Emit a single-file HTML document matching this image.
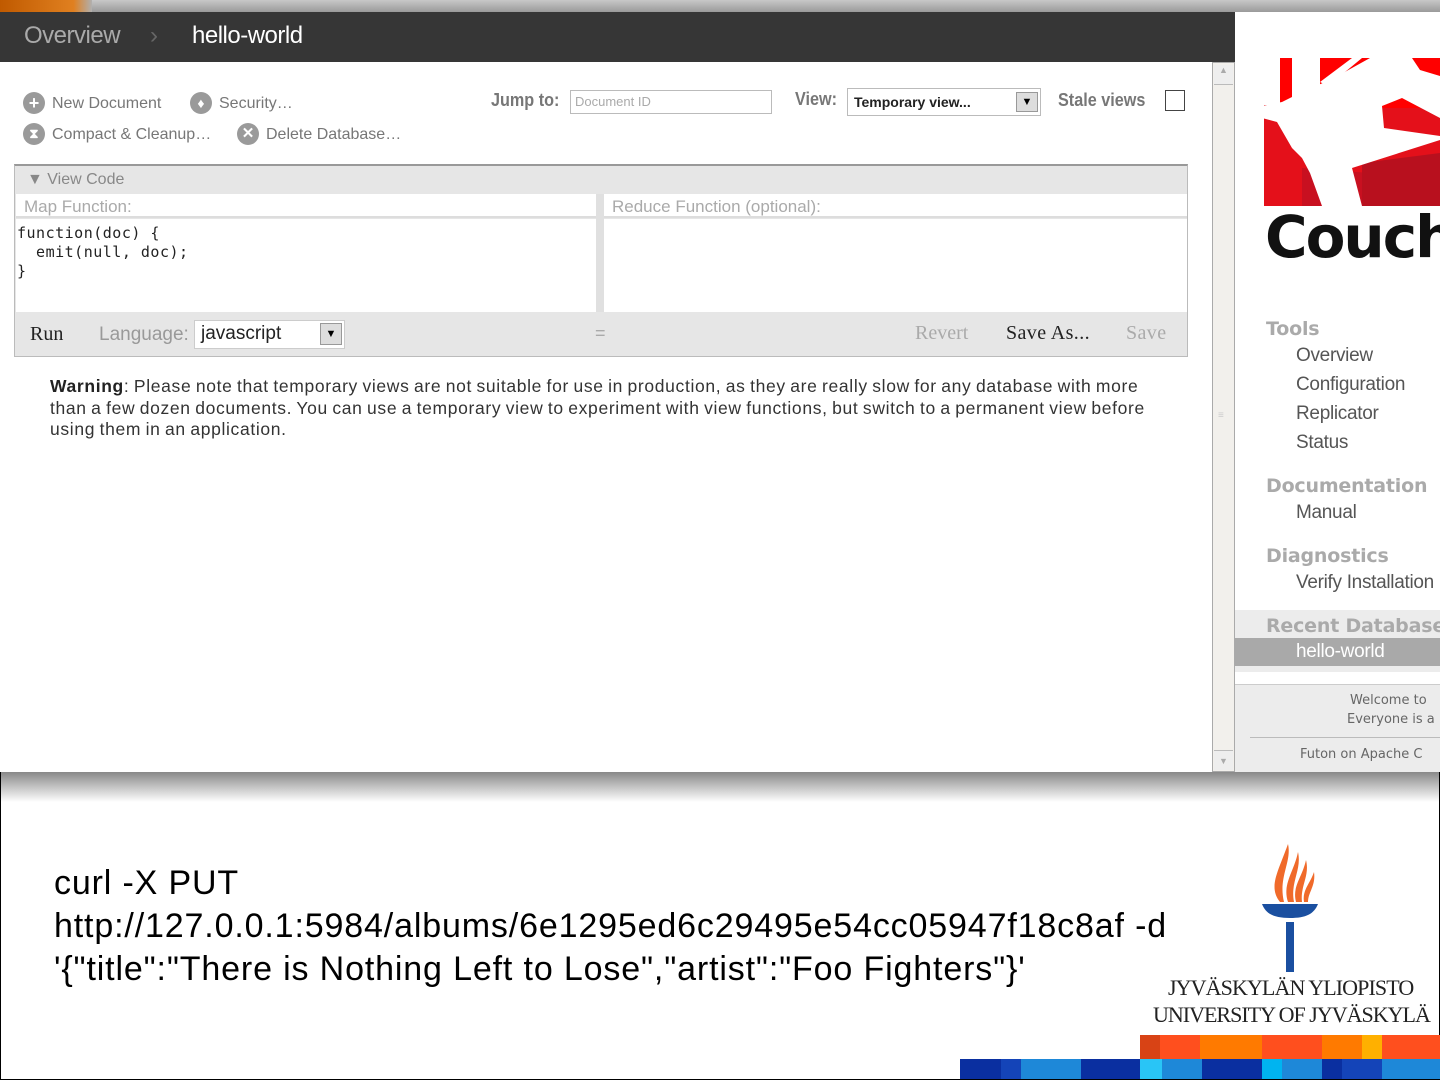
<!DOCTYPE html>
<html><head><meta charset="utf-8"><style>
*{margin:0;padding:0;box-sizing:border-box}
body{width:1440px;height:1080px;position:relative;overflow:hidden;background:#fff;font-family:"Liberation Sans",sans-serif}
.a{position:absolute;white-space:nowrap}
.g{color:#777}
.ic{position:absolute;width:22px;height:22px;border-radius:50%;background:#9a9a9a;color:#fff;font-weight:bold;text-align:center;line-height:22px;font-size:18px}
.sb{color:#555;font-size:19px;position:absolute;left:1296px;white-space:nowrap;letter-spacing:-.3px}
.sh{color:#aaa;font-size:19px;font-weight:bold;position:absolute;left:1266px;font-family:"DejaVu Sans",sans-serif;white-space:nowrap;letter-spacing:-.2px}
</style></head><body>
<div class="a" style="left:0;top:772px;width:1440px;height:308px;border:1px solid #000;border-top:none"></div>
<div class="a" style="left:0;top:0;width:1440px;height:12px;background:linear-gradient(#c8c8c8,#9a9a9a)"></div>
<div class="a" style="left:0;top:0;width:92px;height:12px;background:linear-gradient(90deg,#c05a00,#e08020 80%,#b0b0b0)"></div>
<div class="a" style="left:0;top:12px;width:1235px;height:50px;background:#363636"></div>
<div class="a" style="left:24px;top:22px;font-size:24px;color:#aaa;letter-spacing:-.5px">Overview</div>
<div class="a" style="left:150px;top:22px;font-size:24px;color:#666">›</div>
<div class="a" style="left:192px;top:22px;font-size:24px;color:#fff;letter-spacing:-.5px">hello-world</div>
<div class="a" style="left:0;top:62px;width:1212px;height:710px;background:#fff"></div>
<div class="ic" style="left:23px;top:92px">+</div><div class="a g" style="left:52px;top:95px;font-size:16px">New Document</div>
<div class="ic" style="left:190px;top:92px;font-size:14px">♦</div><div class="a g" style="left:219px;top:95px;font-size:16px">Security…</div>
<div class="ic" style="left:23px;top:123px;font-size:13px">⧗</div><div class="a g" style="left:52px;top:126px;font-size:16px">Compact &amp; Cleanup…</div>
<div class="ic" style="left:237px;top:123px;font-size:15px">✕</div><div class="a g" style="left:266px;top:126px;font-size:16px">Delete Database…</div>
<div class="a" style="left:491px;top:90px;font-size:18px;color:#777;font-weight:bold;transform:scaleX(.9);transform-origin:left">Jump to:</div>
<div class="a" style="left:570px;top:90px;width:202px;height:24px;border:1px solid #bbb;font-size:13px;color:#aaa;padding:3px 4px">Document ID</div>
<div class="a" style="left:795px;top:89px;font-size:18px;color:#777;font-weight:bold;transform:scaleX(.9);transform-origin:left">View:</div>
<div class="a" style="left:847px;top:88px;width:194px;height:28px;border:1px solid #bbb;font-size:14px;font-weight:bold;color:#222;padding:5px 6px">Temporary view...</div>
<div class="a" style="left:1016px;top:92px;width:22px;height:20px;background:#ddd;border:1px solid #999;font-size:11px;text-align:center;line-height:18px">▼</div>
<div class="a" style="left:1058px;top:90px;font-size:18px;color:#777;font-weight:bold;transform:scaleX(.9);transform-origin:left">Stale views</div>
<div class="a" style="left:1165px;top:90px;width:20px;height:21px;border:1.5px solid #444;background:#fff"></div>
<div class="a" style="left:14px;top:164px;width:1174px;height:193px;background:#e6e6e6;border:1px solid #bbb;border-top:2px solid #999"></div>
<div class="a" style="left:27px;top:171px;font-size:16px;color:#888">▼ View Code</div>
<div class="a" style="left:16px;top:194px;width:580px;height:24px;background:#fff;border-bottom:2px solid #ddd"></div>
<div class="a" style="left:24px;top:197px;font-size:17px;color:#aaa">Map Function:</div>
<div class="a" style="left:16px;top:219px;width:580px;height:93px;background:#fff"></div>
<div class="a" style="left:17px;top:224px;font-family:'DejaVu Sans Mono',monospace;font-size:15px;line-height:19px;color:#222;white-space:pre;letter-spacing:.5px">function(doc) {
  emit(null, doc);
}</div>
<div class="a" style="left:596px;top:194px;width:8px;height:118px;background:#e0e0e0"></div>
<div class="a" style="left:604px;top:194px;width:583px;height:24px;background:#fff;border-bottom:2px solid #ddd"></div>
<div class="a" style="left:612px;top:197px;font-size:17px;color:#aaa">Reduce Function (optional):</div>
<div class="a" style="left:604px;top:219px;width:583px;height:93px;background:#fff"></div>
<div class="a" style="left:30px;top:323px;font-family:'Liberation Serif',serif;font-size:20px;color:#222">Run</div>
<div class="a" style="left:99px;top:324px;font-size:19px;color:#999">Language:</div>
<div class="a" style="left:194px;top:320px;width:151px;height:29px;background:#fff;border:1px solid #ccc;font-size:19px;color:#222;padding:2px 6px">javascript</div>
<div class="a" style="left:320px;top:323px;width:22px;height:22px;background:#ddd;border:1px solid #999;font-size:11px;text-align:center;line-height:20px">▼</div>
<div class="a" style="left:595px;top:323px;font-size:18px;color:#aaa">=</div>
<div class="a" style="left:915px;top:322px;font-family:'Liberation Serif',serif;font-size:20px;color:#aaa">Revert</div>
<div class="a" style="left:1006px;top:322px;font-family:'Liberation Serif',serif;font-size:20px;color:#222;letter-spacing:.4px">Save As...</div>
<div class="a" style="left:1126px;top:322px;font-family:'Liberation Serif',serif;font-size:20px;color:#aaa;letter-spacing:.4px">Save</div>
<div class="a" style="left:50px;top:376px;width:1160px;white-space:nowrap;font-size:17.5px;line-height:21.5px;color:#333;letter-spacing:.65px;word-spacing:-1px"><b style="color:#222">Warning</b>: Please note that temporary views are not suitable for use in production, as they are really slow for any database with more<br>than a few dozen documents. You can use a temporary view to experiment with view functions, but switch to a permanent view before<br>using them in an application.</div>
<div class="a" style="left:1212px;top:62px;width:23px;height:710px;background:#f2f0ec;border:1px solid #aaa"></div>
<div class="a" style="left:1214px;top:65px;width:19px;height:20px;background:#eee;border-bottom:1px solid #bbb;font-size:9px;color:#aaa;text-align:center">▲</div>
<div class="a" style="left:1214px;top:750px;width:19px;height:20px;background:#eee;border-top:1px solid #bbb;font-size:9px;color:#aaa;text-align:center;line-height:20px">▼</div>
<div class="a" style="left:1218px;top:410px;font-size:10px;color:#ccc">≡</div>
<div class="a" style="left:1235px;top:12px;width:205px;height:760px;background:#fff"></div>
<svg class="a" style="left:1262px;top:58px" width="178" height="148" viewBox="0 0 178 148">
<rect x="2" y="47" width="176" height="101" fill="#e4101a"/>
<rect x="18" y="0" width="160" height="50" fill="#ff0000"/>
<polygon points="40,110 178,120 178,148 40,148" fill="#c81020"/>
<polygon points="100,105 178,95 178,148 100,148" fill="#b8101e"/>
<polygon points="30,0 58,0 58,40 38,55 30,48" fill="#fff"/>
<polygon points="0,48 20,44 36,36 72,20 108,0 150,0 158,12 178,18 178,60 140,40 120,48 122,70 178,78 178,82 90,110 100,148 60,148 48,115 40,100 30,90 15,64 0,60" fill="#fff"/>
<polygon points="90,0 100,0 66,28 58,24" fill="#fff"/>
</svg>
<div class="a" style="left:1265px;top:203px;font-family:'DejaVu Sans',sans-serif;font-weight:bold;font-size:58px;color:#111;letter-spacing:-2px">Couch</div>
<div class="sh" style="top:318px">Tools</div>
<div class="sb" style="top:345px">Overview</div>
<div class="sb" style="top:374px">Configuration</div>
<div class="sb" style="top:403px">Replicator</div>
<div class="sb" style="top:432px">Status</div>
<div class="sh" style="top:475px">Documentation</div>
<div class="sb" style="top:502px">Manual</div>
<div class="sh" style="top:545px">Diagnostics</div>
<div class="sb" style="top:572px">Verify Installation</div>
<div class="a" style="left:1235px;top:610px;width:205px;height:28px;background:#ececec"></div>
<div class="sh" style="top:615px">Recent Databases</div>
<div class="a" style="left:1235px;top:638px;width:205px;height:28px;background:#a9a9a9"></div>
<div class="a" style="left:1296px;top:641px;font-size:19px;color:#fff;letter-spacing:-.3px">hello-world</div>
<div class="a" style="left:1235px;top:666px;width:205px;height:6px;background:#ececec"></div>
<div class="a" style="left:1235px;top:684px;width:205px;height:88px;background:#ececec;border-top:1px solid #ccc"></div>
<div class="a" style="left:1350px;top:693px;font-family:'DejaVu Sans',sans-serif;font-size:13px;color:#666">Welcome to</div>
<div class="a" style="left:1347px;top:712px;font-family:'DejaVu Sans',sans-serif;font-size:13px;color:#666">Everyone is a</div>
<div class="a" style="left:1250px;top:737px;width:190px;height:1px;background:#bbb"></div>
<div class="a" style="left:1300px;top:747px;font-family:'DejaVu Sans',sans-serif;font-size:13px;color:#666">Futon on Apache C</div>
<div class="a" style="left:1px;top:772px;width:1438px;height:30px;background:linear-gradient(#888,rgba(255,255,255,0))"></div>
<div class="a" style="left:54px;top:862px;font-size:34px;line-height:43px;color:#000;letter-spacing:.85px">curl -X PUT<br>http://127.0.0.1:5984/albums/6e1295ed6c29495e54cc05947f18c8af -d<br>'{"title":"There is Nothing Left to Lose","artist":"Foo Fighters"}'</div>
<svg class="a" style="left:1258px;top:842px" width="64" height="132" viewBox="0 0 64 132">
<path d="M22 60 C10 45 20 30 30 2 C34 20 20 35 26 60Z M30 60 C24 42 36 30 40 10 C44 28 32 40 36 60Z M38 60 C34 44 44 36 48 18 C52 34 42 44 44 60Z M46 60 C44 48 52 42 56 30 C58 44 50 50 50 60Z" fill="#f06a2a"/>
<path d="M4 62 H60 C56 72 48 76 32 76 C16 76 8 72 4 62Z" fill="#1a4fa0"/>
<rect x="28" y="80" width="8" height="50" fill="#1a4fa0"/>
</svg>
<div class="a" style="left:1168px;top:975px;font-family:'Liberation Serif',serif;font-size:22px;color:#222;letter-spacing:-.9px">JYVÄSKYLÄN YLIOPISTO</div>
<div class="a" style="left:1153px;top:1002px;font-family:'Liberation Serif',serif;font-size:22px;color:#222;letter-spacing:-1px">UNIVERSITY OF JYVÄSKYLÄ</div>
<div class="a" style="left:1140px;top:1035px;height:24px;width:300px;display:flex">
<div style="width:20px;background:#d84315"></div><div style="width:40px;background:#ff4f1e"></div><div style="width:62px;background:#ff7a00"></div><div style="width:60px;background:#ff4f1e"></div><div style="width:40px;background:#ff7a00"></div><div style="width:20px;background:#ffb000"></div><div style="width:58px;background:#ff4f1e"></div></div>
<div class="a" style="left:960px;top:1059px;height:20px;width:480px;display:flex">
<div style="width:41px;background:#0a2fa0"></div><div style="width:20px;background:#1444b8"></div><div style="width:60px;background:#1e88d8"></div><div style="width:59px;background:#0a2fa0"></div><div style="width:22px;background:#29c5f6"></div><div style="width:40px;background:#1e88d8"></div><div style="width:60px;background:#0a2fa0"></div><div style="width:20px;background:#00b4f0"></div><div style="width:40px;background:#1e88d8"></div><div style="width:20px;background:#0a2fa0"></div><div style="width:40px;background:#1444b8"></div><div style="width:58px;background:#1e88d8"></div></div>
<div class="a" style="left:0;top:1079px;width:1440px;height:1px;background:#000"></div>
</body></html>
